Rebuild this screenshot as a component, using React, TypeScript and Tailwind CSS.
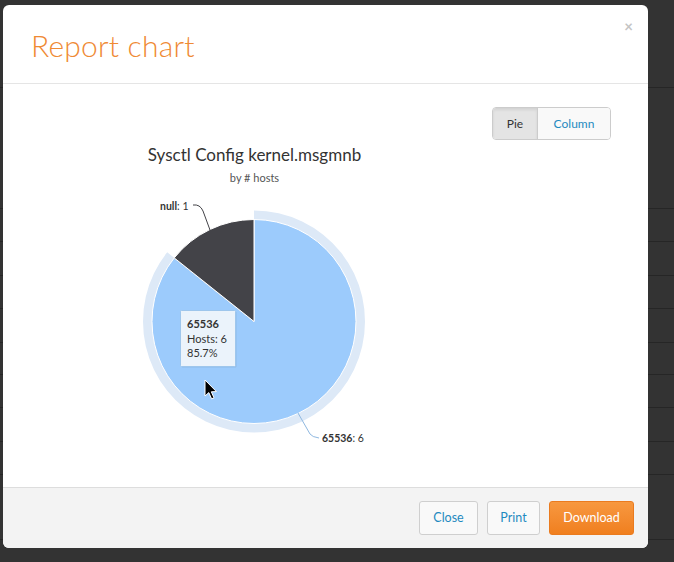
import React from "react";

const rows = [88, 121, 33, 34, 33, 34, 32, 33, 34, 33, 65];

function Cursor() {
  return (
    <path
      d="M202 296 L202 312 L205.8 308.6 L208.6 314.8 L211 313.8 L208.3 307.8 L213.4 307.6 Z"
      fill="#000"
      stroke="#fff"
      strokeWidth={1}
      strokeLinejoin="round"
    />
  );
}

function Chart() {
  return (
    <svg width={480} height={403} viewBox="0 0 480 403" className="block shrink-0">
      <text
        x={251.5}
        y={77}
        textAnchor="middle"
        fontSize={17}
        fill="#333333"
        style={{ fontFamily: "Lato, 'Open Sans', sans-serif", fontWeight: 400 }}
      >
        Sysctl Config kernel.msgmnb
      </text>
      <text
        x={251.5}
        y={98}
        textAnchor="middle"
        fontSize={11}
        fill="#555"
        style={{ fontFamily: "Lato, 'Open Sans', sans-serif" }}
      >
        by # hosts
      </text>

      {/* halo */}
      <path d="M 251 126.5 A 111 111 0 1 1 164.22 168.29 L 251 237.5 Z" fill="#dde9f7" />
      {/* blue slice */}
      <path
        d="M 251 135.5 A 102 102 0 1 1 171.25 173.9 L 251 237.5 Z"
        fill="#9ccbfc"
        stroke="#ffffff"
        strokeWidth={1}
      />
      {/* dark slice */}
      <path
        d="M 171.25 173.9 A 102 102 0 0 1 251 135.5 L 251 237.5 Z"
        fill="#434348"
        stroke="#ffffff"
        strokeWidth={1}
      />

      {/* connectors */}
      <path d="M 190 121 Q 197 120 200 127 L 207 146" fill="none" stroke="#434348" strokeWidth={1} />
      <path d="M 295 329 L 307 350 Q 309 353 316 354" fill="none" stroke="#8fb8e0" strokeWidth={1} />

      {/* labels */}
      <text
        x={157}
        y={126}
        fontSize={10.5}
        fill="#333"
        style={{ fontFamily: "Lato, 'Open Sans', sans-serif" }}
      >
        <tspan fontWeight={700}>null</tspan>: 1
      </text>
      <text
        x={319}
        y={358}
        fontSize={10.5}
        fill="#333"
        style={{ fontFamily: "Lato, 'Open Sans', sans-serif" }}
      >
        <tspan fontWeight={700}>65536</tspan>: 6
      </text>

      {/* tooltip */}
      <rect x={178.5} y={227.5} width={55} height={56} fill="#000" opacity={0.08} rx={1} />
      <rect x={177.5} y={226.5} width={55} height={56} fill="#ebf3fb" stroke="#9ec6ec" strokeWidth={1} rx={1} />
      <g style={{ fontFamily: "Lato, 'Open Sans', sans-serif" }} fontSize={11} fill="#333">
        <text x={184} y={244} fontWeight={700}>
          65536
        </text>
        <text x={184} y={259}>
          Hosts: 6
        </text>
        <text x={184} y={273}>
          85.7%
        </text>
      </g>

      <Cursor />
    </svg>
  );
}

export default function App() {
  return (
    <div
      className="relative w-[674px] h-[562px] overflow-hidden bg-[#333333]"
      style={{ fontFamily: "Lato, 'Open Sans', sans-serif" }}
    >
      {/* background page rows */}
      <div className="flex flex-col">
        {rows.map((h, i) => (
          <div key={i} className="border-b border-[#262626] shrink-0" style={{ height: h }} />
        ))}
      </div>

      {/* modal */}
      <div className="absolute left-[3px] top-[5px] w-[645px] h-[543px] bg-white rounded-[6px] flex flex-col overflow-hidden">
        <div className="relative h-[79px] shrink-0 border-b border-[#e5e5e5] pl-[28px] pt-[23px]">
          <h1 className="text-[30px] leading-[34px] font-light text-[#ef8a34] tracking-[0.2px]">Report chart</h1>
          <span className="absolute right-[15px] top-[10px] text-[15px] font-bold text-[#c4c4c4]">×</span>
        </div>

        <div className="flex-1 flex justify-between">
          <Chart />
          <div className="mt-[23px] mr-[37px] flex h-[33px] rounded-[4px] border border-[#cccccc] overflow-hidden text-[12px]">
            <div className="w-[45px] flex items-center justify-center bg-[#e4e4e4] text-[#333] border-r border-[#cccccc] shadow-[inset_0_2px_3px_rgba(0,0,0,0.08)]">
              Pie
            </div>
            <div className="w-[72px] flex items-center justify-center bg-[#f9f9f9] text-[#1f8ac0]">Column</div>
          </div>
        </div>

        <div className="h-[61px] shrink-0 border-t border-[#dddddd] bg-[#f3f3f3] flex items-center justify-end gap-[9px] pr-[14px]">
          <button className="w-[59px] h-[34px] rounded-[3px] border border-[#cfcfcf] bg-[#f9f9f9] text-[12.5px] text-[#1f8ac0]">
            Close
          </button>
          <button className="w-[53px] h-[34px] rounded-[3px] border border-[#cfcfcf] bg-[#f9f9f9] text-[12.5px] text-[#1f8ac0]">
            Print
          </button>
          <button className="w-[85px] h-[34px] rounded-[3px] border border-[#ea7b1f] bg-gradient-to-b from-[#f7983f] to-[#f07f1e] text-[12.5px] text-white">
            Download
          </button>
        </div>
      </div>
    </div>
  );
}
